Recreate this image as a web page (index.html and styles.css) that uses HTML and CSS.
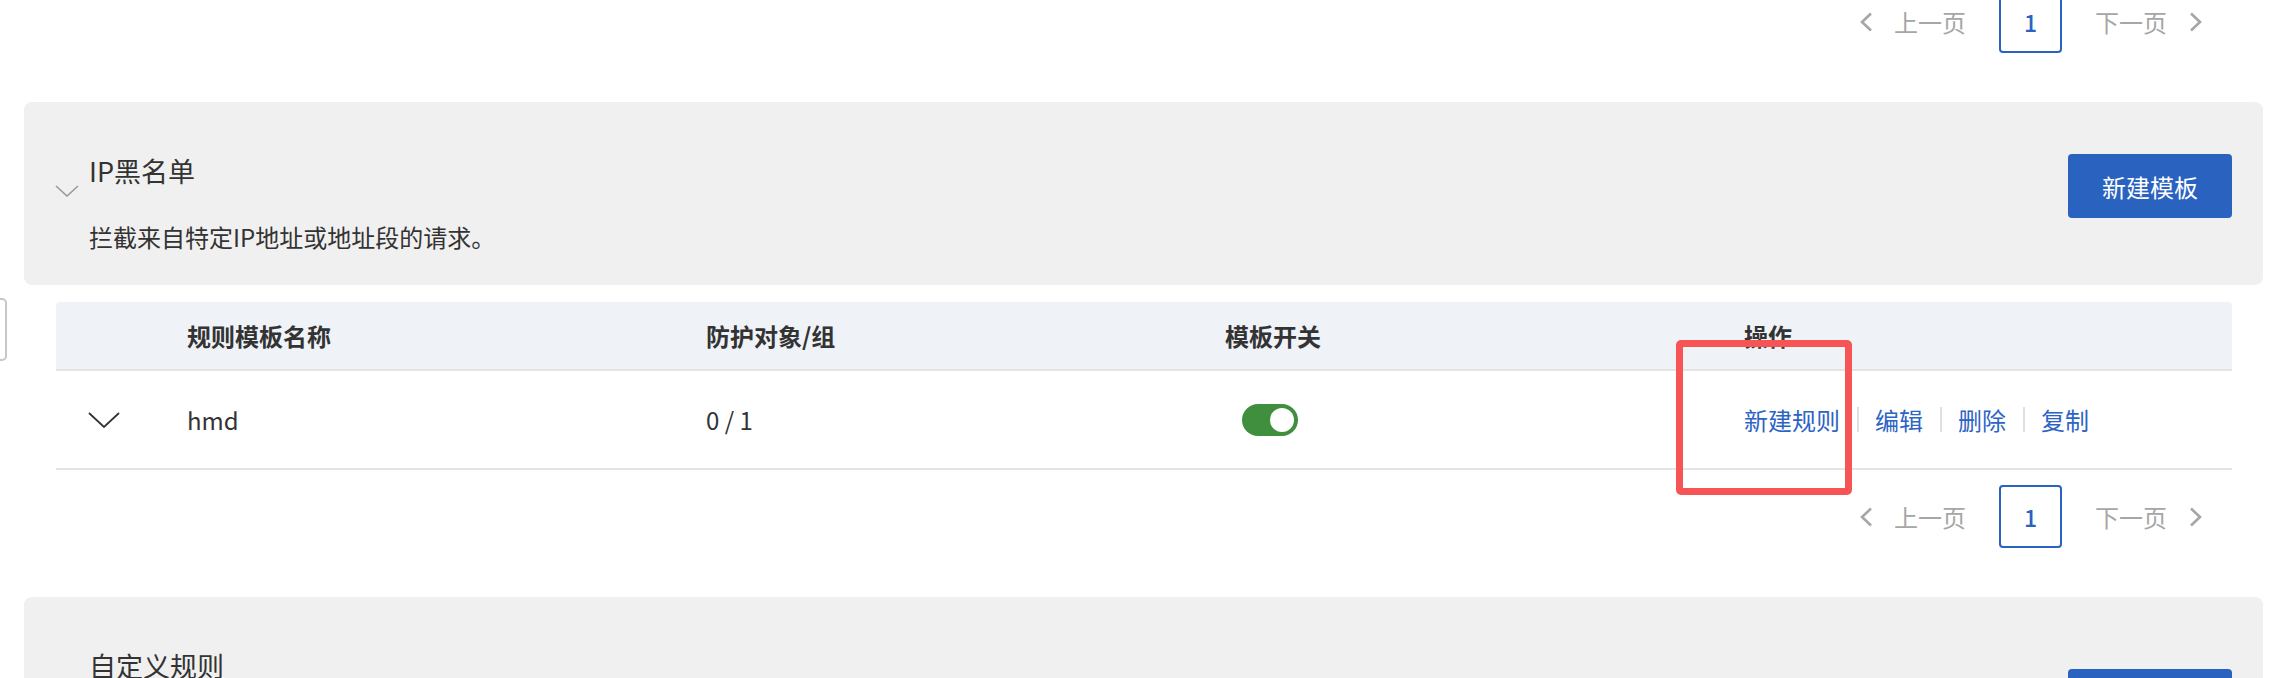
FILE: index.html
```html
<!DOCTYPE html>
<html lang="zh-CN">
<head>
<meta charset="utf-8">
<title>规则模板</title>
<link rel="stylesheet" href="styles.css">
</head>
<body>
<div class="page">
  <div class="pager pager-top">
    <span class="pg-arrow"><svg width="14" height="20" viewBox="0 0 14 20"><path d="M12 1.5 L3 10 L12 18.5" fill="none" stroke="#a6a6a6" stroke-width="2.6"/></svg></span>
    <span class="pg-text pg-prev">上一页</span>
    <span class="pg-num">1</span>
    <span class="pg-text pg-next">下一页</span>
    <span class="pg-arrow"><svg width="14" height="20" viewBox="0 0 14 20"><path d="M2 1.5 L11 10 L2 18.5" fill="none" stroke="#a6a6a6" stroke-width="2.6"/></svg></span>
  </div>

  <section class="panel">
    <div class="panel-main">
      <div class="panel-title-row">
        <span class="panel-chevron"><svg width="24" height="12" viewBox="0 0 24 12"><path d="M1 1 L12 11 L23 1" fill="none" stroke="#9a9a9a" stroke-width="1.6"/></svg></span>
        <h2 class="panel-title">IP黑名单</h2>
      </div>
      <p class="panel-desc">拦截来自特定IP地址或地址段的请求。</p>
    </div>
    <button class="btn-primary">新建模板</button>
  </section>

  <div class="table-area">
    <div class="side-stub"></div>
    <div class="table-block">
      <div class="tbl">
        <div class="tbl-head">
          <div class="cell"></div>
          <div class="cell">规则模板名称</div>
          <div class="cell">防护对象/组</div>
          <div class="cell">模板开关</div>
          <div class="cell">操作</div>
        </div>
        <div class="tbl-row">
          <div class="cell"><span class="row-chevron"><svg width="32" height="16" viewBox="0 0 32 16"><path d="M1 1 L16 15 L31 1" fill="none" stroke="#333" stroke-width="1.8"/></svg></span></div>
          <div class="cell">hmd</div>
          <div class="cell">0 / 1</div>
          <div class="cell"><span class="toggle"><span class="knob"></span></span></div>
          <div class="cell actions">
            <a class="act">新建规则</a><span class="sep"></span><a class="act">编辑</a><span class="sep"></span><a class="act">删除</a><span class="sep"></span><a class="act">复制</a>
          </div>
        </div>
      </div>
      <div class="pager pager-bottom">
        <span class="pg-arrow"><svg width="14" height="20" viewBox="0 0 14 20"><path d="M12 1.5 L3 10 L12 18.5" fill="none" stroke="#a6a6a6" stroke-width="2.6"/></svg></span>
        <span class="pg-text pg-prev">上一页</span>
        <span class="pg-num">1</span>
        <span class="pg-text pg-next">下一页</span>
        <span class="pg-arrow"><svg width="14" height="20" viewBox="0 0 14 20"><path d="M2 1.5 L11 10 L2 18.5" fill="none" stroke="#a6a6a6" stroke-width="2.6"/></svg></span>
      </div>
    </div>
  </div>

  <section class="panel panel-second">
    <div class="panel-main">
      <div class="panel-title-row">
        <span class="panel-chevron"><svg width="24" height="12" viewBox="0 0 24 12"><path d="M1 1 L12 11 L23 1" fill="none" stroke="#9a9a9a" stroke-width="1.6"/></svg></span>
        <h2 class="panel-title">自定义规则</h2>
      </div>
      <p class="panel-desc">自定义规则描述。</p>
    </div>
    <button class="btn-primary btn-low">新建模板</button>
  </section>
</div>
<div class="highlight-box"></div>
</body>
</html>
```

FILE: styles.css
```css
html, body {
  margin: 0;
  padding: 0;
  background: #ffffff;
  overflow: hidden;
}
body {
  position: relative;
  font-family: "Noto Sans CJK SC", "Noto Sans", sans-serif;
  color: #333333;
  width: 2296px;
  height: 678px;
}
.page {
  padding: 0 33px 0 24px;
}

/* pager */
.pager {
  display: flex;
  align-items: center;
  justify-content: flex-end;
  padding-right: 29px;
  height: 63px;
}
.pager-top {
  margin-top: -10px;
  padding-right: 60px;
}
.pager-bottom {
  margin-top: 15px;
  padding-right: 29px;
}
.pg-arrow {
  display: flex;
  width: 14px;
  height: 20px;
}
.pg-text {
  font-size: 24px;
  line-height: 32px;
  color: #a6a6a6;
}
.pg-prev {
  margin-left: 21px;
  margin-right: 33px;
}
.pg-next {
  margin-left: 33px;
  margin-right: 22px;
}
.pg-num {
  box-sizing: border-box;
  width: 63px;
  height: 63px;
  border: 2px solid #2a62c0;
  border-radius: 4px;
  display: flex;
  align-items: center;
  justify-content: center;
  color: #2a62c0;
  font-size: 23px;
  font-weight: 500;
}

/* panel */
.panel {
  margin-top: 49px;
  background: #f0f0f0;
  border-radius: 8px;
  display: flex;
  justify-content: space-between;
  align-items: flex-start;
  padding: 49px 31px 30px 31px;
  height: 183px;
  box-sizing: border-box;
}
.panel-title-row {
  display: flex;
  align-items: flex-end;
}
.panel-chevron {
  display: flex;
  width: 24px;
  height: 12px;
  margin-bottom: -6px;
  margin-right: 10px;
}
.panel-title {
  margin: 0;
  font-size: 27px;
  line-height: 40px;
  font-weight: 400;
  color: #333333;
}
.panel-desc {
  margin: 28px 0 0 34px;
  font-size: 24px;
  line-height: 36px;
  color: #333333;
}
.btn-primary {
  margin-top: 3px;
  width: 164px;
  height: 64px;
  border: none;
  border-radius: 4px;
  background: #2a62c0;
  color: #ffffff;
  font-family: "Noto Sans CJK SC", "Noto Sans", sans-serif;
  font-size: 24px;
  padding: 0;
}
.btn-low {
  margin-top: 23px;
}

/* table */
.table-area {
  display: flex;
  align-items: flex-start;
  margin-top: 13px;
}
.side-stub {
  flex: none;
  width: 40px;
  height: 63px;
  box-sizing: border-box;
  margin-left: -57px;
  border: 2px solid #c4c8cc;
  border-radius: 5px;
  background: #fff;
}
.table-block {
  flex: 1;
  margin-left: 49px;
  margin-right: 31px;
  margin-top: 4px;
}
.tbl-head,
.tbl-row {
  display: grid;
  grid-template-columns: 131px 519px 519px 519px 1fr;
  align-items: center;
}
.tbl-head {
  height: 67px;
  background: #eff2f7;
  border-radius: 4px 4px 0 0;
  border-bottom: 2px solid #e4e4e4;
  font-size: 24px;
  font-weight: 700;
  color: #333333;
}
.tbl-row {
  height: 97px;
  border-bottom: 2px solid #e4e4e4;
  font-size: 24px;
  color: #333333;
}
.cell {
  display: flex;
  align-items: center;
}
.row-chevron {
  display: flex;
  margin-left: 32px;
}
.toggle {
  position: relative;
  margin-left: 17px;
  width: 56px;
  height: 32px;
  border-radius: 16px;
  background: #3f8f3f;
}
.knob {
  position: absolute;
  right: 4px;
  top: 4px;
  width: 24px;
  height: 24px;
  border-radius: 50%;
  background: #ffffff;
}
.actions .act {
  color: #2d64c4;
  font-size: 24px;
  cursor: pointer;
}
.sep {
  width: 2px;
  height: 25px;
  background: #e0e0e0;
  margin: 0 16px 0 17px;
}

/* annotation overlay */
.highlight-box {
  position: absolute;
  left: 1676px;
  top: 340px;
  width: 176px;
  height: 155px;
  box-sizing: border-box;
  border: 7px solid #f75555;
  border-radius: 5px;
}
```
